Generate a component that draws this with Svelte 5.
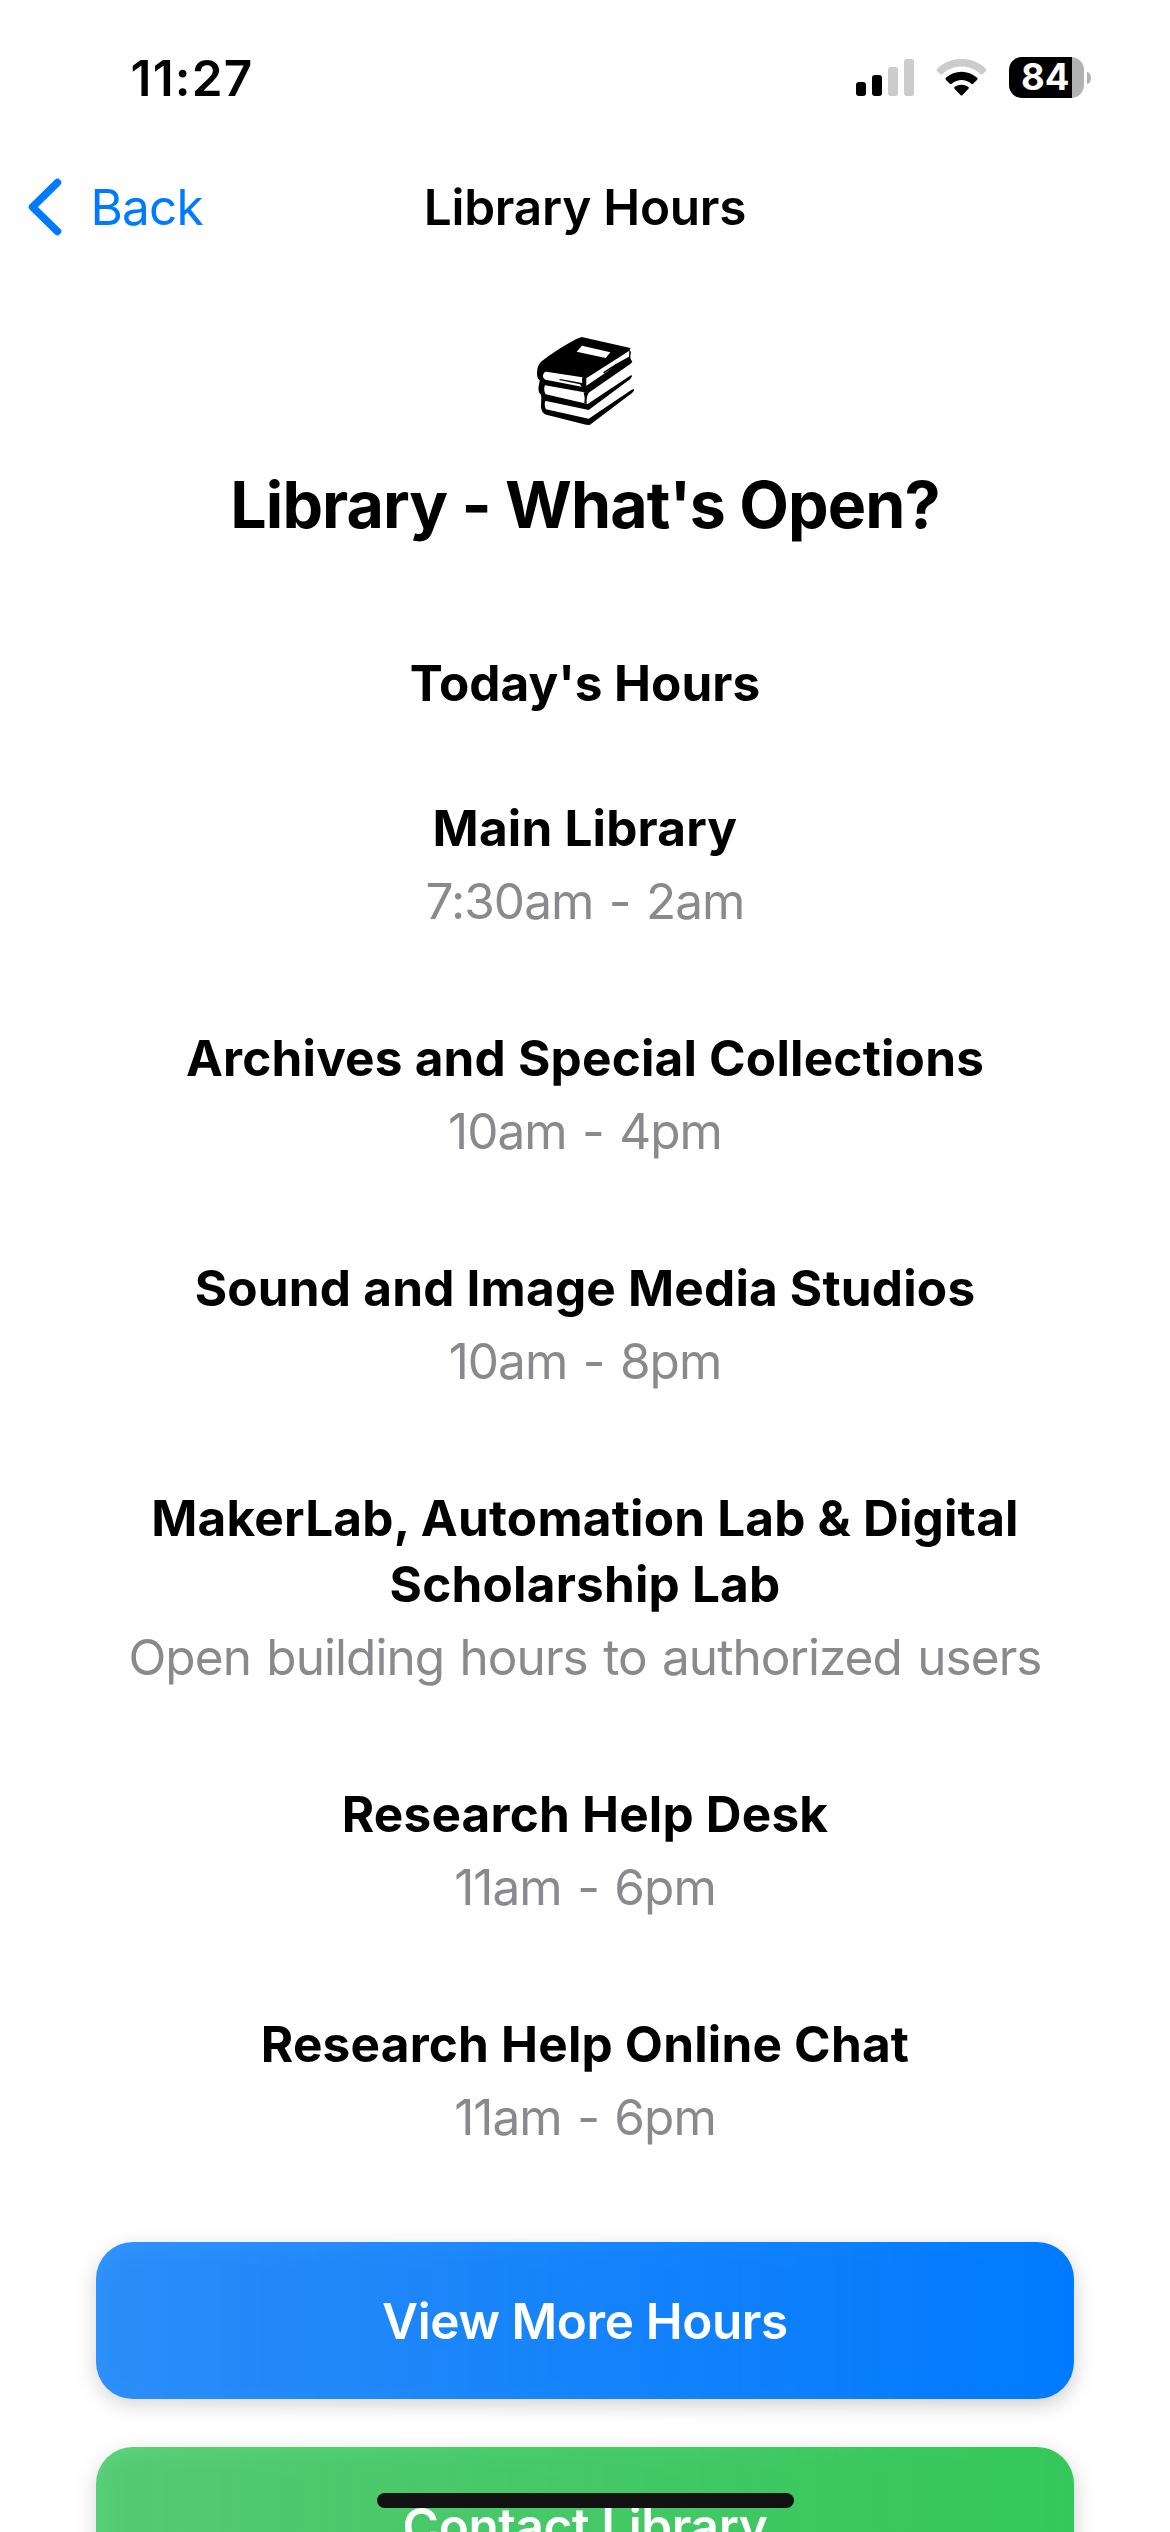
<script>
  const places = [
    { name: 'Main Library', hours: '7:30am - 2am' },
    { name: 'Archives and Special Collections', hours: '10am - 4pm' },
    { name: 'Sound and Image Media Studios', hours: '10am - 8pm' },
    { name: 'MakerLab, Automation Lab & Digital Scholarship Lab', hours: 'Open building hours to authorized users' },
    { name: 'Research Help Desk', hours: '11am - 6pm' },
    { name: 'Research Help Online Chat', hours: '11am - 6pm' }
  ];
</script>

<div class="screen">
  <header class="status">
    <span class="time">11:27</span>
    <div class="indicators">
      <svg class="signal" viewBox="0 0 58 37">
        <rect y="23" width="10" height="14" rx="3" />
        <rect x="16" y="16" width="10" height="21" rx="3" />
        <rect class="dim" x="32" y="8" width="10" height="29" rx="3" />
        <rect class="dim" x="48" width="10" height="37" rx="3" />
      </svg>
      <svg class="wifi" viewBox="0 0 152 111">
        <path class="dim" d="M2 35Q0 32 3 29C43-10 109-10 149 29Q152 32 150 35L139 46Q136 48 133 45C101 15 51 15 19 45Q16 48 13 46Z" />
        <path d="M29 62Q26 59 29 56C56 32 96 32 123 56Q126 59 123 62L111 74Q108 76 105 74C88 59 64 59 47 74Q44 76 41 74Z" />
        <path d="M55 89Q52 86 56 83C67 75 85 75 96 83Q100 86 97 89L79 108Q76 111 73 108Z" />
      </svg>
      <div class="battery"><div class="cell"><span>84</span></div><i></i></div>
    </div>
  </header>
  <nav>
    <div class="back">
      <svg viewBox="0 0 34 58"><path d="M29.500 4.500L4.500 29L29.500 53.500" /></svg>
      <span>Back</span>
    </div>
    <h2>Library Hours</h2>
    <div></div>
  </nav>
  <main>
    <svg class="books" viewBox="0 0 360 300">
      <!-- top book: cover, spine, label, page edges -->
      <path d="M170 21L316 54L314 60L318 66L315 84L322 95L317 101L190 189L56 165Q44 160 44 151Q36 146 36 130Q36 105 50 94Q92 60 154 27Z" />
      <path class="paper" d="M171 47L256 67L242 84L155 65Z" />
      <path class="paper" d="M64 125L172 142Q170 151 172 159L105 147L102 150L165 163L170 170L66 150Q53 149 54 136Q56 126 64 125Z" />
      <path class="paper" d="M184 145L313 62L312 87L194 170L184 169Z" />
      <path d="M234 127Q274 99 316 78L316 91L194 174L166 167L182 169L297 91Q270 111 237 130Z" />
      <!-- middle book -->
      <path d="M44 153L60 165Q54 178 62 193L188 222L313 139L319 135L321 139L316 147L191 240L60 212Q48 206 48 194Q38 187 41 168Z" />
      <path d="M176 187L192 187Q183 201 185 221L178 219Q181 204 176 187Z" />
      <!-- bottom book -->
      <path d="M49 200L62 211Q56 225 63 238L191 266L320 179L326 177L327 182L321 189L194 285L183 284L64 254Q48 247 48 230Z" />
    </svg>
    <h1>Library - What's Open?</h1>
    <h3>Today's Hours</h3>
    {#each places as p}
      <section><h4>{p.name}</h4><p>{p.hours}</p></section>
    {/each}
    <div class="actions">
      <button class="blue">View More Hours</button>
      <button class="green">Contact Library</button>
    </div>
  </main>
  <div class="home"></div>
</div>

<style>
  .screen { position: relative; width: 1170px; height: 2532px; overflow: hidden; background: #fff; color: #000; font-family: Inter, sans-serif; font-size: 49.5px; }
  .status { height: 141px; padding: 51px 79px 0 130.5px; box-sizing: border-box; display: flex; justify-content: space-between; }
  .time { line-height: 54px; font-weight: 600; letter-spacing: 1.2px; }
  .indicators { display: flex; }
  .indicators svg { height: 37px; margin-top: 8px; }
  .signal { width: 58px; }
  .wifi { width: 51px; margin: 0 22px; }
  .dim { fill: #ccc; }
  .battery { display: flex; align-items: center; gap: 3px; height: 41px; margin-top: 6px; }
  .cell { width: 75px; height: 41px; box-sizing: border-box; padding-left: 12px; border-radius: 13px; background: linear-gradient(90deg, #000 63px, #b2b2b2 63px); color: #fff; font-size: 36.5px; line-height: 41px; font-weight: 700; }
  .battery i { width: 4px; height: 12px; border-radius: 0 4px 4px 0 / 0 6px 6px 0; background: #b2b2b2; }
  nav { height: 132px; display: grid; grid-template-columns: 1fr auto 1fr; align-items: center; }
  .back { display: flex; align-items: center; gap: 29px; color: #007aff; padding-left: 27.5px; letter-spacing: -0.8px; }
  .back svg { width: 34px; height: 58px; fill: none; stroke: #007aff; stroke-width: 7.5; stroke-linecap: round; stroke-linejoin: round; }
  h1, h2, h3, h4, p { margin: 0; }
  h2 { font-size: 49.5px; font-weight: 600; letter-spacing: -0.25px; }
  main { display: flex; flex-direction: column; align-items: center; padding: 57px 96px 0; text-align: center; }
  .books { width: 120px; height: 100px; }
  .paper { fill: #fff; }
  h1 { font-size: 64.5px; line-height: 80px; font-weight: 700; letter-spacing: -0.95px; margin-top: 35px; }
  h3, h4 { font-size: 49.5px; line-height: 66px; font-weight: 700; letter-spacing: 0.2px; }
  h3 { letter-spacing: 0; margin: 105px 0 79px; }
  section { margin-bottom: 91px; }
  p { line-height: 66px; margin-top: 7px; color: #8a8a8e; letter-spacing: -0.95px; word-spacing: 2.4px; }
  .actions { display: flex; flex-direction: column; gap: 48px; align-self: stretch; margin-top: 1px; }
  button { height: 157px; padding: 0; border: 0; border-radius: 37px; color: #fff; font: 600 49.5px Inter, sans-serif; letter-spacing: -0.4px; filter: drop-shadow(0 6px 10px rgba(0, 0, 0, 0.2)); }
  .blue { background: linear-gradient(90deg, rgba(0, 122, 255, 0.8), #007aff); }
  .green { background: linear-gradient(90deg, rgba(52, 199, 89, 0.8), #34c759); }
  .home { position: absolute; left: 377px; top: 2493px; width: 417px; height: 15px; border-radius: 8px; background: #121212; }
</style>
